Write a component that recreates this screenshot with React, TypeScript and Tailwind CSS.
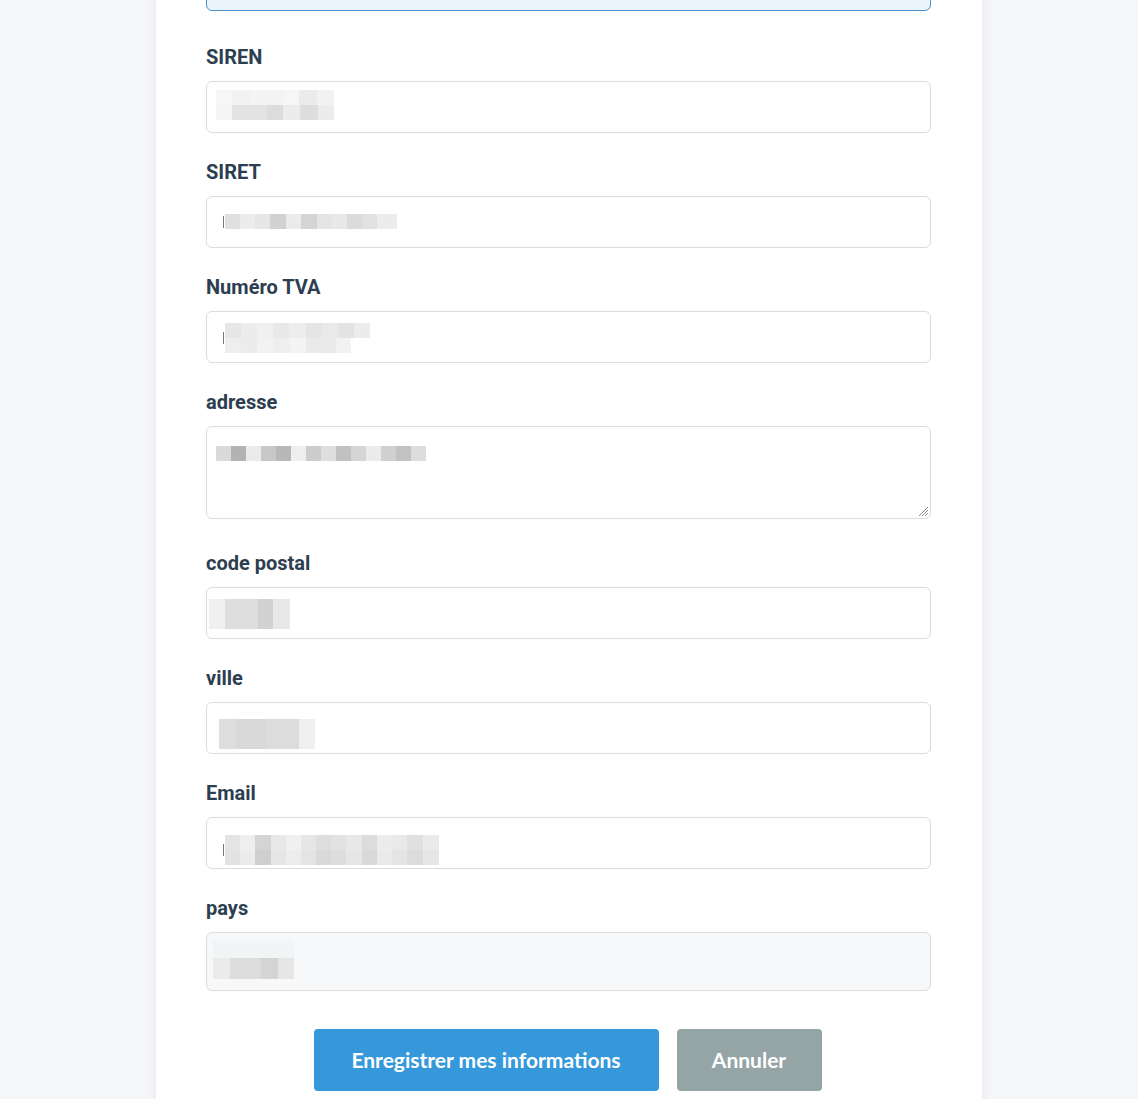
import React from 'react';

type Cell = [number, string];
type PixelRows = Cell[][];

interface FieldProps {
  label: string;
  kind: 'input' | 'textarea' | 'select';
  left: number;
  top: number;
  lead?: boolean;
  rows: PixelRows;
}

// blurred values, drawn as blocks of grey cells
const Pixels = ({ rows }: { rows: PixelRows }) => (
  <div className="flex flex-col">
    {rows.map((row, i) => (
      <div key={i} className="flex">
        {row.map(([w, c], j) => (
          <span key={j} className="block h-[15px]" style={{ width: w, background: c }} />
        ))}
      </div>
    ))}
  </div>
);

const fields: FieldProps[] = [
  {
    label: 'SIREN',
    kind: 'input',
    left: 9,
    top: 8,
    rows: [
      [[16, '#f6f6f6'], [19, '#f1f1f1'], [16, '#f4f4f4'], [17, '#f3f3f3'], [15, '#f6f6f6'], [18, '#ebebeb'], [17, '#f2f2f2']],
      [[16, '#f5f5f5'], [35, '#e3e3e3'], [16, '#dcdcdc'], [17, '#ececec'], [18, '#dddddd'], [16, '#ececec']],
    ],
  },
  {
    label: 'SIRET',
    kind: 'input',
    left: 16,
    top: 17,
    lead: true,
    rows: [
      [[15, '#e0e0e0'], [15, '#ececec'], [15, '#e6e6e6'], [16, '#d2d2d2'], [15, '#ebebeb'], [16, '#d4d4d4'], [15, '#e4e4e4'], [15, '#e8e8e8'], [15, '#dbdbdb'], [15, '#e1e1e1'], [15, '#ececec'], [5, '#ececec']],
    ],
  },
  {
    label: 'Numéro TVA',
    kind: 'input',
    left: 16,
    top: 11,
    lead: true,
    rows: [
      [[16, '#e6e6e6'], [16, '#ececec'], [16, '#f0f0f0'], [16, '#e8e8e8'], [17, '#ededed'], [16, '#e5e5e5'], [16, '#e9e9e9'], [16, '#e3e3e3'], [16, '#ececec']],
      [[16, '#eeeeee'], [16, '#ececec'], [16, '#f2f2f2'], [17, '#eeeeee'], [16, '#f4f4f4'], [15, '#eaeaea'], [15, '#e9e9e9'], [15, '#f2f2f2'], [19, '#ffffff']],
    ],
  },
  {
    label: 'adresse',
    kind: 'textarea',
    left: 9,
    top: 19,
    rows: [
      [[15, '#dadada'], [15, '#b3b3b3'], [15, '#ebebeb'], [15, '#c8c8c8'], [15, '#b8b8b8'], [15, '#eeeeee'], [15, '#cdcdcd'], [15, '#dedede'], [15, '#c1c1c1'], [15, '#d5d5d5'], [15, '#ebebeb'], [15, '#d0d0d0'], [15, '#c2c2c2'], [15, '#dddddd']],
    ],
  },
  {
    label: 'code postal',
    kind: 'input',
    left: 2,
    top: 11,
    rows: [
      [[16, '#f0f0f0'], [33, '#dedede'], [15, '#d2d2d2'], [17, '#e8e8e8']],
      [[16, '#f0f0f0'], [33, '#dedede'], [15, '#d2d2d2'], [17, '#e8e8e8']],
    ],
  },
  {
    label: 'ville',
    kind: 'input',
    left: 12,
    top: 16,
    rows: [
      [[17, '#dedede'], [31, '#d9d9d9'], [32, '#dcdcdc'], [16, '#f0f0f0']],
      [[17, '#dedede'], [31, '#d9d9d9'], [32, '#dcdcdc'], [16, '#f0f0f0']],
    ],
  },
  {
    label: 'Email',
    kind: 'input',
    left: 16,
    top: 17,
    lead: true,
    rows: [
      [[15, '#e4e4e4'], [15, '#eeeeee'], [16, '#d4d4d4'], [15, '#e8e8e8'], [15, '#f0f0f0'], [15, '#e6e6e6'], [15, '#dedede'], [15, '#e2e2e2'], [16, '#e8e8e8'], [15, '#dcdcdc'], [15, '#ececec'], [15, '#e9e9e9'], [16, '#e0e0e0'], [16, '#eaeaea']],
      [[15, '#e2e2e2'], [15, '#ececec'], [16, '#cfcfcf'], [15, '#e6e6e6'], [15, '#ededed'], [15, '#e4e4e4'], [15, '#d9d9d9'], [15, '#dddddd'], [16, '#e6e6e6'], [15, '#d9d9d9'], [15, '#eaeaea'], [15, '#e4e4e4'], [16, '#dcdcdc'], [16, '#e6e6e6']],
    ],
  },
];

const Field = ({ label, kind, left, top, lead, rows }: FieldProps) => (
  <div className={kind === 'textarea' ? 'mb-[30px]' : 'mb-[25px]'}>
    <label className="mb-[10px] block text-[20px] font-bold leading-[28px] text-[#2c3e50]">{label}</label>
    <div
      className={`relative w-full rounded-[6px] border border-[#dcdcdc] bg-white ${
        kind === 'textarea' ? 'h-[93px]' : 'h-[52px]'
      }`}
    >
      <div className="absolute flex items-center" style={{ left, top }}>
        {lead && <span className="mr-[1px] block h-[12px] w-[1px] bg-[#777]" />}
        <Pixels rows={rows} />
      </div>
      {kind === 'textarea' && (
        <svg className="absolute bottom-[1px] right-[1px]" width="12" height="12" viewBox="0 0 12 12">
          <path d="M11 2 L2 11 M11 5 L5 11 M11 8 L8 11" stroke="#888" strokeWidth="1" />
        </svg>
      )}
    </div>
  </div>
);

export default function App() {
  return (
    <div className="min-h-[1099px] overflow-hidden bg-[#f4f6fa] font-['Roboto',sans-serif]">
      <div className="mx-auto w-[826px] bg-white pb-[40px] pl-[50px] pr-[51px] shadow-[0_0_12px_rgba(0,0,0,0.06)]">
        <div className="-mt-[40px] mb-[32px] h-[51px] rounded-[6px] border border-[#4a8fc7] bg-[#eaf4fd]" />
        {fields.map((f) => (
          <Field key={f.label} {...f} />
        ))}
        <div>
          <label className="mb-[10px] block text-[20px] font-bold leading-[28px] text-[#2c3e50]">pays</label>
          <div className="relative h-[59px] w-full rounded-[6px] border border-[#dcdcdc] bg-[#f7f8fa]">
            <div className="absolute left-[6px] top-[7px]">
              <div className="flex h-[18px]">
                <span className="block w-[81px] bg-[#f2f5f5]" />
              </div>
              <div className="flex h-[21px]">
                <span className="block w-[17px] bg-[#ebebeb]" />
                <span className="block w-[31px] bg-[#dcdcdc]" />
                <span className="block w-[17px] bg-[#d4d4d4]" />
                <span className="block w-[16px] bg-[#e6e6e6]" />
              </div>
            </div>
          </div>
        </div>
        <div className="mt-[38px] flex justify-center gap-[18px] pr-[2px]">
          <button className="h-[62px] w-[345px] rounded-[4px] bg-[#3498db] font-['Lato',sans-serif] text-[21px] font-bold text-white">
            Enregistrer mes informations
          </button>
          <button className="h-[62px] w-[145px] rounded-[4px] bg-[#95a5a6] font-['Lato',sans-serif] text-[21px] font-bold text-white">
            Annuler
          </button>
        </div>
      </div>
    </div>
  );
}
